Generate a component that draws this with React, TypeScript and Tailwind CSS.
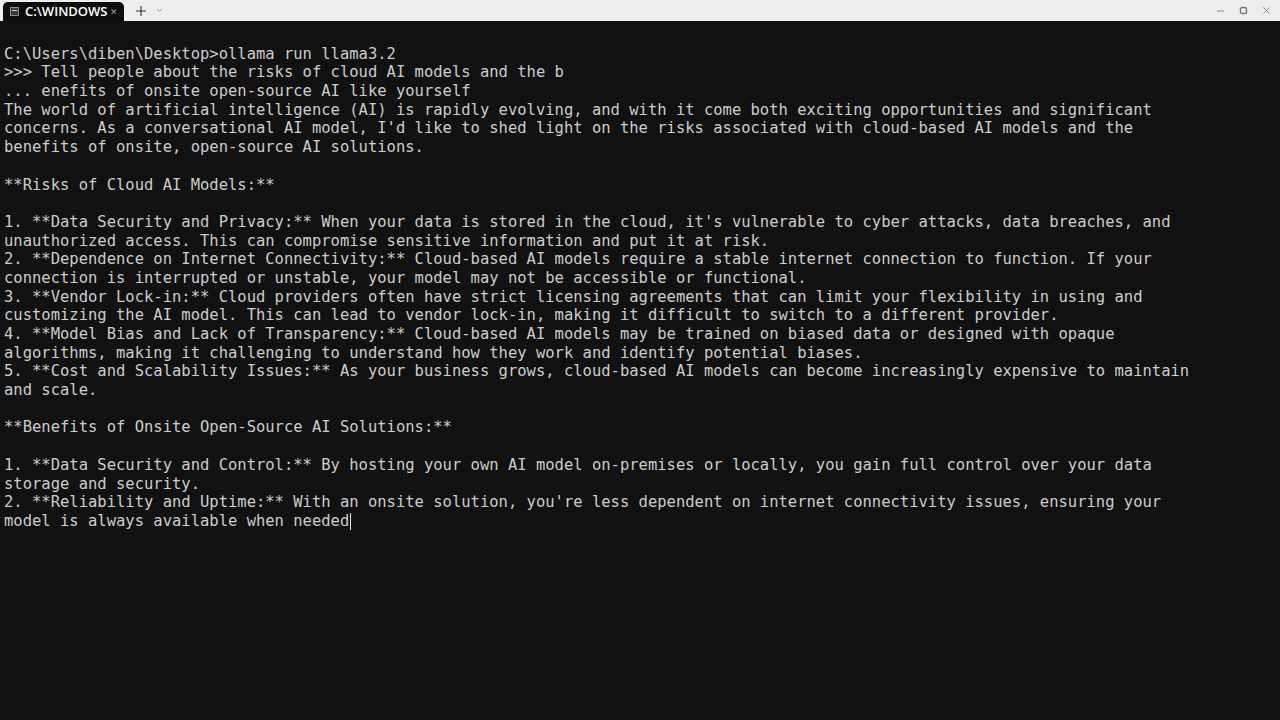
import React from "react";

const lines = [
  "",
  "C:\\Users\\diben\\Desktop>ollama run llama3.2",
  ">>> Tell people about the risks of cloud AI models and the b",
  "... enefits of onsite open-source AI like yourself",
  "The world of artificial intelligence (AI) is rapidly evolving, and with it come both exciting opportunities and significant",
  "concerns. As a conversational AI model, I'd like to shed light on the risks associated with cloud-based AI models and the",
  "benefits of onsite, open-source AI solutions.",
  "",
  "**Risks of Cloud AI Models:**",
  "",
  "1. **Data Security and Privacy:** When your data is stored in the cloud, it's vulnerable to cyber attacks, data breaches, and",
  "unauthorized access. This can compromise sensitive information and put it at risk.",
  "2. **Dependence on Internet Connectivity:** Cloud-based AI models require a stable internet connection to function. If your",
  "connection is interrupted or unstable, your model may not be accessible or functional.",
  "3. **Vendor Lock-in:** Cloud providers often have strict licensing agreements that can limit your flexibility in using and",
  "customizing the AI model. This can lead to vendor lock-in, making it difficult to switch to a different provider.",
  "4. **Model Bias and Lack of Transparency:** Cloud-based AI models may be trained on biased data or designed with opaque",
  "algorithms, making it challenging to understand how they work and identify potential biases.",
  "5. **Cost and Scalability Issues:** As your business grows, cloud-based AI models can become increasingly expensive to maintain",
  "and scale.",
  "",
  "**Benefits of Onsite Open-Source AI Solutions:**",
  "",
  "1. **Data Security and Control:** By hosting your own AI model on-premises or locally, you gain full control over your data",
  "storage and security.",
  "2. **Reliability and Uptime:** With an onsite solution, you're less dependent on internet connectivity issues, ensuring your",
];

function TitleBar() {
  return (
    <div className="flex h-[21px] items-end bg-[#eeeeee]">
      {/* tab */}
      <div className="ml-[3px] flex h-[19px] w-[121px] items-center rounded-t-[5px] bg-[#0c0c0c] pl-[7px] pr-[6px]">
        <svg width="9" height="9" viewBox="0 0 9 9" className="shrink-0">
          <rect x="0.5" y="0.5" width="8" height="8" fill="#3a3a3a" stroke="#8a8a8a" />
          <rect x="2" y="3" width="5" height="1" fill="#cfcfcf" />
        </svg>
        <span className="ml-[6px] font-['Open_Sans',sans-serif] text-[13px] font-semibold leading-none text-white">
          C:\WINDOWS
        </span>
        <span className="ml-auto text-[9px] leading-none text-[#9a9a9a]">✕</span>
      </div>
      <div className="flex h-[21px] items-center">
        <svg width="12" height="12" viewBox="0 0 12 12" className="ml-[11px]">
          <path d="M6 1v10M1 6h10" stroke="#333" strokeWidth="1.1" />
        </svg>
        <svg width="7" height="5" viewBox="0 0 7 5" className="ml-[9px]">
          <path d="M1 1l2.5 2.5L6 1" stroke="#999" strokeWidth="1" fill="none" />
        </svg>
      </div>
      <div className="ml-auto flex h-[21px] items-center gap-[14px] pr-[9px]">
        <svg width="9" height="9" viewBox="0 0 9 9">
          <path d="M1 5h7" stroke="#888" strokeWidth="1" />
        </svg>
        <svg width="9" height="9" viewBox="0 0 9 9">
          <rect x="1.5" y="1.5" width="6" height="6" rx="1.5" fill="none" stroke="#777" strokeWidth="1.4" />
        </svg>
        <svg width="9" height="9" viewBox="0 0 9 9">
          <path d="M1.5 1.5l6 6M7.5 1.5l-6 6" stroke="#888" strokeWidth="1" />
        </svg>
      </div>
    </div>
  );
}

export default function App() {
  return (
    <div className="flex h-[720px] w-[1280px] flex-col overflow-hidden bg-[#0c0c0c]">
      <TitleBar />
      <div className="flex-1 bg-[#111111] pl-[4px] pt-[5px] font-['DejaVu_Sans_Mono','Liberation_Mono',monospace] text-[15.5px] leading-[18.7px] text-[#cccccc]">
        {lines.map((l, i) => (
          <div key={i} className="h-[18.7px] whitespace-pre">
            {l}
          </div>
        ))}
        <div className="flex h-[18.7px] items-center whitespace-pre">
          <span>model is always available when needed</span>
          <span className="ml-[1px] inline-block h-[17px] w-[1px] bg-[#e0e0e0]" />
        </div>
      </div>
    </div>
  );
}
